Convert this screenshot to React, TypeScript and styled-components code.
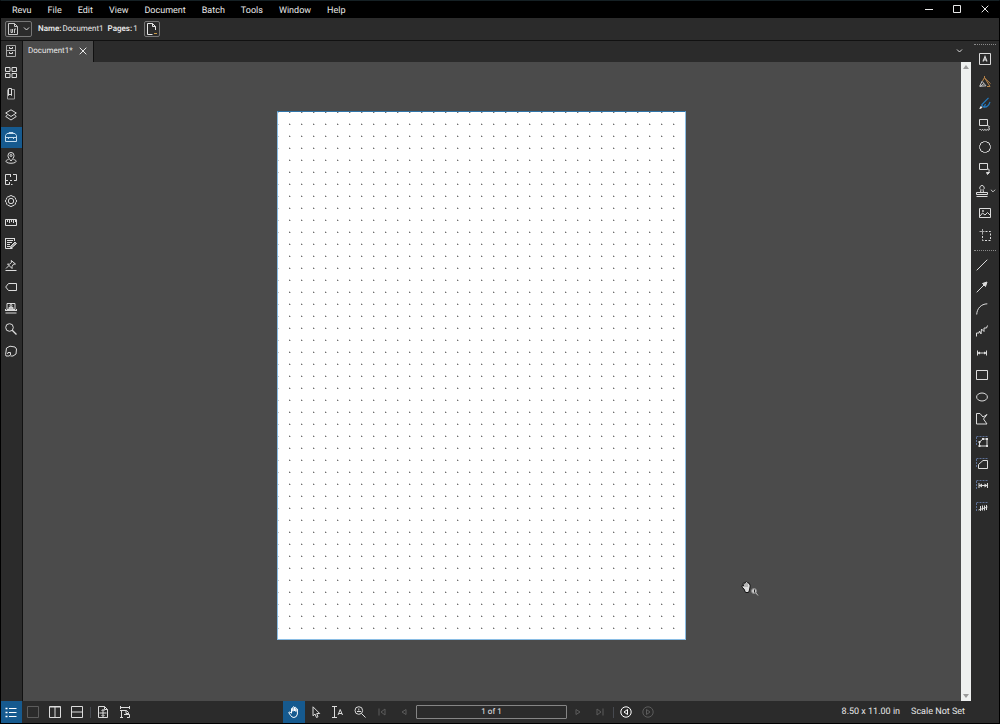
import React from "react";
import styled, { createGlobalStyle, css } from "styled-components";

const c = {
  black: "#000",
  panel: "#2b2b2b",
  canvas: "#4b4b4b",
  line: "#111",
  text: "#e8e8e8",
  icon: "#dcdcdc",
  dim: "#5c5c5c",
  accent: "#165a8f",
};

const GlobalStyle = createGlobalStyle`
  *, *::before, *::after { box-sizing: border-box; }
  html, body { margin: 0; background: ${c.black}; }
  body {
    font-family: Roboto, "Liberation Sans", sans-serif;
    color: ${c.text};
    text-rendering: geometricPrecision;
  }
  button, input { font: inherit; color: inherit; text-rendering: inherit; }
  svg { display: block; flex: none; }
`;

const Shell = styled.div`
  display: flex;
  flex-direction: column;
  min-height: 100vh;
  background: ${c.panel};
  border: 1px solid ${c.black};
  border-top-color: #152024;
`;

const plain = css`
  appearance: none;
  border: 0;
  padding: 0;
  margin: 0;
  background: none;
  display: flex;
  align-items: center;
  justify-content: center;
`;

const TitleBar = styled.header`
  display: flex;
  justify-content: space-between;
  height: 17px;
  background: ${c.black};
`;

const Menu = styled.nav`
  display: flex;
  align-items: center;
  gap: 16px;
  padding: 2px 0 0 11px;
`;

const MenuItem = styled.button`
  ${plain}
  font-size: 9px;
  line-height: 12px;
`;

const WindowButtons = styled.div`
  display: flex;
`;

const WindowButton = styled.button`
  ${plain}
  width: 28px;
  padding-bottom: 1px;
`;

const FileBar = styled.div`
  display: flex;
  align-items: center;
  height: 23px;
  padding-left: 4px;
  border-bottom: 1px solid ${c.line};
  font-size: 8px;
  line-height: 12px;
`;

const OutlineButton = styled.button<{ $width: number }>`
  ${plain}
  width: ${(p) => p.$width}px;
  height: 16px;
  gap: 4px;
  border: 1px solid #777;
  border-radius: 2px;
`;

const FactList = styled.div`
  display: flex;
  gap: 4px;
  margin: 0 6px;
`;

const Fact = styled.span`
  display: flex;
  gap: 1px;
  white-space: nowrap;
  b { font-weight: 600; }
`;

const Body = styled.div`
  display: flex;
  flex: 1;
`;

const LeftRail = styled.aside`
  display: grid;
  grid-template-rows: repeat(15, 1fr);
  width: 22px;
  height: 321px;
  flex: none;
`;

const RailButton = styled.button<{ $active?: boolean }>`
  ${plain}
  width: 21px;
  padding: 0 1px 1px 0;
  background: ${(p) => (p.$active ? c.accent : "none")};
`;

const Workspace = styled.main`
  display: flex;
  flex-direction: column;
  flex: 1;
  min-width: 0;
  border-left: 1px solid ${c.line};
  margin-left: -1px;
`;

const TabBar = styled.div`
  display: flex;
  justify-content: space-between;
  height: 21px;
`;

const Tab = styled.div`
  display: flex;
  align-items: center;
  gap: 6px;
  padding: 0 6px 1px 5px;
  background: ${c.canvas};
  border-right: 1px solid ${c.line};
  font-size: 8px;
  line-height: 12px;
`;

const TabButton = styled.button`
  ${plain}
`;

const TabMenu = styled.button`
  ${plain}
  width: 24px;
  padding-bottom: 2px;
`;

const View = styled.div`
  display: flex;
  flex: 1;
`;

const Canvas = styled.section`
  position: relative;
  display: flex;
  flex: 1;
  justify-content: center;
  align-items: flex-start;
  padding: 49px 21px 60px 0;
  background: ${c.canvas};
`;

const Sheet = styled.div`
  width: 409px;
  height: 529px;
  border: 1px solid #8abde4;
  border-top-color: #2f74a8;
  background-color: #fff;
  background-image: url("data:image/svg+xml,%3Csvg xmlns='http://www.w3.org/2000/svg' width='12' height='12'%3E%3Cpath d='M11 0h1v1h-1z' fill='%23707070'/%3E%3Cpath d='M0 0h1v1H0zM11 11h1v1h-1z' fill='%23c8c8c8'/%3E%3C/svg%3E");
`;

const Pointer = styled.div`
  position: absolute;
  right: 202px;
  bottom: 104px;
`;

const Scrollbar = styled.div`
  display: flex;
  flex-direction: column;
  justify-content: space-between;
  width: 10px;
  background: #eef0ef;
`;

const ScrollButton = styled.button`
  ${plain}
  height: 10px;
`;

const RightRail = styled.aside`
  width: 28px;
  flex: none;
  padding-top: 3px;
`;

const Grip = styled.div`
  width: 22px;
  margin-left: 3px;
  border-top: 1px dotted #8a8a8a;
`;

const Tools = styled.div<{ $inset: number }>`
  display: flex;
  flex-direction: column;
  padding: 3px 0 4px ${(p) => p.$inset}px;
`;

const Tool = styled.button`
  ${plain}
  justify-content: flex-start;
  gap: 2px;
  height: 22px;
`;

const StatusBar = styled.footer`
  display: flex;
  align-items: stretch;
  height: 22px;
`;

const StatusButton = styled.button<{ $active?: boolean }>`
  ${plain}
  width: 22px;
  color: ${c.icon};
  background: ${(p) => (p.$active ? c.accent : "none")};
  &:disabled { color: ${c.dim}; }
`;

const PanelToggle = styled(StatusButton)`
  width: 21px;
  padding-right: 1px;
`;

const Divider = styled.span`
  align-self: center;
  width: 1px;
  height: 11px;
  margin: 0 1px 0 2px;
  background: #474a50;
`;

const Group = styled.div<{ $start?: number }>`
  display: flex;
  align-items: stretch;
  margin-left: ${(p) => p.$start ?? 0}px;
`;

const PageField = styled.input`
  align-self: center;
  width: 151px;
  height: 14px;
  margin: 0 0 0 1px;
  padding: 0 0 2px;
  border: 1px solid #858585;
  border-radius: 1px;
  background: transparent;
  text-align: center;
  font-size: 8px;
`;

const Facts = styled.div`
  display: flex;
  align-items: center;
  gap: 11px;
  margin-left: auto;
  padding: 0 34px 1px 0;
  font-size: 9px;
  line-height: 12px;
  white-space: nowrap;
`;

type IconProps = { children: React.ReactNode; w?: number; h?: number; color?: string };

const Icon = ({ children, w = 12, h = 12, color = "currentColor" }: IconProps) => (
  <svg width={w} height={h} viewBox={`0 0 ${w} ${h}`} fill="none" stroke={color} strokeWidth={1} aria-hidden="true">
    {children}
  </svg>
);

const P = ({ d, ...rest }: React.SVGProps<SVGPathElement>) => <path d={d} {...rest} />;

const railIcons: { label: string; art: React.ReactNode; active?: boolean }[] = [
  { label: "File Access", art: <><P d="M2 .5h8.500v11H1.500V.5zM1.500 5.500h9" stroke="#aaa" /><P d="M4.500 2v1.500h3V2M4.500 7v1.500h3V7" /></> },
  { label: "Thumbnails", art: <P d="M.5.5h4.500v4H.5zM7 .5h4.500v4H7zM.5 6.500h4.500v4H.5zM7 6.500h4.500v4H7z" /> },
  { label: "Bookmarks", art: <><P d="M7 1.500h2.500v9.500h-7v-9.500" stroke="#999" /><P d="M3.500.5v7l1.500-1.500 1.500 1.500V.5z" /></> },
  { label: "Layers", art: <P d="M6 .8l5.300 3.200L6 7.500.7 4zM2.500 6L.7 7.500 6 11l5.300-3.500L9.500 6" /> },
  { label: "Tool Chest", active: true, art: <P d="M.5 4.500l1.500-2h8l1.500 2v6h-11zM.5 6.500h11M4 2.500v-1h4v1M3.500 6v2M8.500 6v2" /> },
  { label: "Places", art: <><P d="M6 9C4 6.500 3 5.500 3 3.500a3 3 0 016 0C9 5.500 8 6.500 6 9z" /><circle cx="6" cy="3.500" r="1" /><P d="M3.500 7.500C.8 8 .2 9.500 2 10.500c2 1 6 1 8 0s1.200-2.500-1.500-3" /></> },
  { label: "Spaces", art: <P d="M6 .5H.5v6h2.500M5 6.500h2M8 .5h3.500v6H9M5.500 3v-2.500M.5 6v4.500h4V8M6 10.500h1.500" /> },
  { label: "Properties", art: <><circle cx="6" cy="6" r="2.700" /><P d="M4.800.7h2.400l.6 1.100 1.200-.2L10.500 3l-.1 1.200 1 .8v2l-1 .8.1 1.200L9 10.500l-1.200-.2-.6 1.100H4.800l-.6-1.100-1.200.2L1.500 9l.1-1.200-1-.8V5l1-.8L1.500 3 3 1.600l1.200.2z" /></> },
  { label: "Measurements", art: <P d="M.5 3.500h11v6H.5zM2.500 4v2M4.500 4v3M6.500 4v2M8.500 4v3M10.500 4v2" /> },
  { label: "Forms", art: <><P d="M.5.5h9M.5 0v10.500h7M9.500 0v3M2 2.500h6M2 4.500h5M2 6.500h3M2 8.500h3" /><P d="M5.500 8.500L10 4l1.500 1.500L7 9.500H5.500z" fill="#999" /></> },
  { label: "Signatures", art: <P d="M.5 11.500h11M1 9.500l3-3M2.500 5l2 .2L6.500 3.500 6.200 1.500 10.500 5 8.500 5.200 7 7.500v2L2.500 5" /> },
  { label: "Markups List", art: <P d="M3.500 2.500h8v7h-8L.7 6z" /> },
  { label: "Studio", art: <><P d="M2 1.500h8v6H2zM.5 8.500h11M.5 11h11M.5 7v2M11.500 7v2" /><P d="M4 7.500V5.300h4v2.200" fill="#bbb" /><circle cx="6" cy="3.500" r="1" /></> },
  { label: "Search", art: <><circle cx="4.500" cy="4.500" r="3.800" /><P d="M7.200 7.200l4.300 4.300" strokeWidth={1.300} /></> },
  { label: "Sets", art: <P d="M1.500 3L5 1.200l5 .8 1.500 2-.5 5-3 2H5.500M1.500 3L.6 9.500 1 11h3l1.500-1V7.500H3L2.500 9" /> },
];

const sideTicks = <P d="M.5 1.500h11M.5 2v9" stroke="#5c6f94" strokeDasharray="2 1" />;

const markupTools: { label: string; art: React.ReactNode; more?: boolean }[] = [
  { label: "Text Box", art: <><P d="M.5.5h11v11H.5z" /><P d="M4 8.500l2-5 2 5M4.700 7h2.600" strokeWidth={1.200} /></> },
  { label: "Pen", art: <><P d="M.7 11.300l2.300-5 4 4.500zM1 11.500l4-3" stroke="#c4c4c4" /><P d="M3.500 6l2-3.500 5.500 9H8M5.500 1v2l6 5.500" stroke="#b98549" /></> },
  { label: "Highlighter", art: <><P d="M2.500 8L9.500.8M2.500 8l2.500 2.300L6.500 7M5 10c3 .5 5-2 6-5" stroke="#2479bd" strokeWidth={1.200} /><P d="M.8 11.500l1.200-2 1 1z" fill="#eee" stroke="#eee" /></> },
  { label: "Cloud Plus", art: <P d="M.5.500h8v6h-8zM.5 10.500h1l1 .8 1-.8 1.200.8 1.200-.8 1.200.8 1.200-.8 1.200.8 1-1.300-.8-1.200.8-1.200L8.500 6.500" /> },
  { label: "Cloud", art: <P d="M4 1.500a2.100 2.100 0 014 0 2 2 0 012.500 2.500 2.100 2.100 0 010 4 2 2 0 01-2.500 2.500 2.100 2.100 0 01-4 0 2 2 0 01-2.500-2.500 2.100 2.100 0 010-4A2 2 0 014 1.500z" /> },
  { label: "Callout", art: <><P d="M.5.5h8v6h-8zM8.500 5.500c2 .5 2 2 1 4.500" /><P d="M7.500 9.500h3L8.500 11.500z" fill="#ddd" /></> },
  { label: "Stamp", more: true, art: <P d="M.5 7.500h11v2H.5zM.5 11.500h11M4.500 7.500l.5-2.800a2.200 2.200 0 112 0l.5 2.800" /> },
  { label: "Image", art: <><P d="M.5 1.500h11v9H.5zM1 9l2.500-3L6 8l2.500-2.500L11 8" /><circle cx="4" cy="4" r=".6" /></> },
  { label: "Snapshot", art: <><P d="M3.500 0v5M.5 2.500h5" stroke="#aaa" /><P d="M6.500 2.500h5v9h-8V5" strokeDasharray="2 1.500" /></> },
];

const shapeTools: { label: string; art: React.ReactNode }[] = [
  { label: "Line", art: <P d="M.7 11.300L11.300.7" /> },
  { label: "Arrow", art: <><P d="M.7 11.300L9 3" /><P d="M6.500 2.500L11 1 9.500 5.500z" fill="#ddd" /></> },
  { label: "Arc", art: <P d="M.7 11.500C1 5.500 5 1 11.300.8" /> },
  { label: "Polyline", art: <P d="M.5 11.500V8H3l.5-2 1.500 3 .5-5 2.500 2.500L8 3h2.500l1-2.500" /> },
  { label: "Dimension", art: <><P d="M1.500 3.500v5M10.500 3.500v5M1 6h10" /><P d="M1.500 6L4 4.500v3zM10.500 6L8 4.500v3z" fill="#ddd" stroke="none" /></> },
  { label: "Rectangle", art: <P d="M.5 1.500h11v9H.5z" /> },
  { label: "Ellipse", art: <ellipse cx="6" cy="6" rx="5.400" ry="4" /> },
  { label: "Polygon", art: <P d="M.5.500v10.500h10.500L7.500 6l3.500-4.500L7 4 4 .500z" /> },
  { label: "Area Polylength", art: <>{sideTicks}<P d="M3.500 11V7l3.500-3h4v7H3.500z" /><P d="M2.500 10h2v2h-2zM10 10h2v2h-2zM10 3h2v2h-2zM6 3h2v2H6zM2.500 6h2v2h-2z" fill="#ddd" stroke="none" /></> },
  { label: "Area", art: <>{sideTicks}<P d="M2.500 11.500v-4l4.500-4h4.500v8z" /></> },
  { label: "Length", art: <>{sideTicks}<P d="M3 4v5M11.500 4v5M3 6.500h8" /><P d="M3 6.500L6 4.500v4zM11.500 6.500l-3-2v4z" fill="#ddd" stroke="none" /></> },
  { label: "Count", art: <>{sideTicks}<P d="M4.500 5v5M6.500 4.500v5M8.500 4.500v5M10.500 4v5M2.500 9l9-3" /></> },
];

const Chevron = ({ w = 7 }: { w?: number }) => (
  <svg width={w} height="4" viewBox="0 0 7 4" fill="none" stroke={c.icon} aria-hidden="true">
    <path d="M1 .5l2.500 2.500L6 .5" />
  </svg>
);

const HandArt = () => (
  <P d="M3.500 7V2.500q.7-1 1.400 0V5.500M4.900 5V1.200q.7-1 1.500 0V5M6.400 5V1.700q.7-1 1.500 0v3.800M7.900 5.500V3q.8-1 1.500 0v5q-.5 3.300-3.500 3.500-2 0-3.200-2L.8 6.800Q1 5.500 2.200 6.200L3.500 7.500" />
);

export default function App() {
  return (
    <>
      <GlobalStyle />
      <Shell>
        <TitleBar>
          <Menu aria-label="Main menu">
            {["Revu", "File", "Edit", "View", "Document", "Batch", "Tools", "Window", "Help"].map((name) => (
              <MenuItem key={name}>{name}</MenuItem>
            ))}
          </Menu>
          <WindowButtons>
            <WindowButton aria-label="Minimize"><Icon w={8} h={8}><P d="M0 4.500h8" /></Icon></WindowButton>
            <WindowButton aria-label="Maximize"><Icon w={8} h={8}><P d="M.5.5h7v7h-7z" /></Icon></WindowButton>
            <WindowButton aria-label="Close"><Icon w={8} h={8}><P d="M.7.7l6.600 6.600M7.300.7L.7 7.300" /></Icon></WindowButton>
          </WindowButtons>
        </TitleBar>

        <FileBar>
          <OutlineButton $width={27} aria-label="Document properties">
            <Icon color="#c8c8c8"><P d="M1.500.5h6l3 3v8h-9zM7.500.5v3h3" /><P d="M4 6v3.500h1.500V6M7.500 10V6h1.500" /></Icon>
            <Chevron />
          </OutlineButton>
          <FactList>
            <Fact><b>Name:</b><span>Document1</span></Fact>
            <Fact><b>Pages:</b><span>1</span></Fact>
          </FactList>
          <OutlineButton $width={16} aria-label="Insert page">
            <Icon><P d="M9.500 7V3.500l-3-3h-5v11h5M6.500.5v3h3" /><P d="M8 10.500h3" stroke="#c99a4a" /></Icon>
          </OutlineButton>
        </FileBar>

        <Body>
          <LeftRail aria-label="Panels">
            {railIcons.map((r) => (
              <RailButton key={r.label} aria-label={r.label} $active={r.active}>
                <Icon color={r.active ? "#c4dcee" : c.icon}>{r.art}</Icon>
              </RailButton>
            ))}
          </LeftRail>

          <Workspace>
            <TabBar>
              <Tab>
                <TabButton>Document1*</TabButton>
                <TabButton aria-label="Close Document1"><Icon w={8} h={8}><P d="M.7.7l6.600 6.600M7.300.7L.7 7.300" /></Icon></TabButton>
              </Tab>
              <TabMenu aria-label="Open documents"><Chevron /></TabMenu>
            </TabBar>
            <View>
              <Canvas>
                <Sheet />
                <Pointer>
                  <svg width="18" height="16" viewBox="0 0 18 16" fill="none" aria-hidden="true">
                    <path d="M3 8L.8 6Q.5 4 2.500 5L2 2.500Q3 1 4 2.500L4.500 1Q6 0 6.500 1.500 8 1 8 3q1.500 0 1.200 2L8.500 9 7.500 11.500H4.500z" fill="#ddd" stroke="#111" />
                    <path d="M4 3v3M6 2v4" stroke="#555" strokeWidth=".6" />
                    <circle cx="13" cy="10" r="2.500" fill="#ccc" stroke="#888" />
                    <path d="M13.500 8.500v3" stroke="#222" />
                    <path d="M15 12l2 2.500" stroke="#bbb" />
                  </svg>
                </Pointer>
              </Canvas>
              <Scrollbar>
                <ScrollButton aria-label="Scroll up"><Icon w={6} h={4}><P d="M0 4l3-4 3 4z" fill="#999" stroke="none" /></Icon></ScrollButton>
                <ScrollButton aria-label="Scroll down"><Icon w={6} h={4}><P d="M0 0l3 4 3-4z" fill="#999" stroke="none" /></Icon></ScrollButton>
              </Scrollbar>
            </View>
          </Workspace>

          <RightRail aria-label="Tools">
            <Grip />
            <Tools $inset={8}>
              {markupTools.map((t) => (
                <Tool key={t.label} aria-label={t.label}>
                  {t.more ? <Group $start={-3}><Icon color={c.icon}>{t.art}</Icon></Group> : <Icon color={c.icon}>{t.art}</Icon>}
                  {t.more && <Chevron w={6} />}
                </Tool>
              ))}
            </Tools>
            <Grip />
            <Tools $inset={5}>
              {shapeTools.map((t) => (
                <Tool key={t.label} aria-label={t.label}><Icon color={c.icon}>{t.art}</Icon></Tool>
              ))}
            </Tools>
          </RightRail>
        </Body>

        <StatusBar>
          <PanelToggle $active aria-label="Markups list"><Icon color="#fff"><P d="M4 2.500h7.500M4 6.500h7.500M4 10.500h7.500" /><P d="M.5 2.500h2M.5 6.500h2M.5 10.500h2" strokeWidth={1.500} /></Icon></PanelToggle>
          <StatusButton disabled aria-label="Single view"><Icon><P d="M.5.5h11v11H.5z" /></Icon></StatusButton>
          <StatusButton aria-label="Split vertical"><Icon><P d="M.5.5h11v11H.5zM6 1v10M.5 1h11" /></Icon></StatusButton>
          <StatusButton aria-label="Split horizontal"><Icon><P d="M.5.5h11v11H.5zM.5 6h11" /></Icon></StatusButton>
          <Divider />
          <StatusButton aria-label="Fit page"><Icon><P d="M1.500.5h6l3 3v8h-9zM7.500.5v3h3M6 3.500v7M2.500 7h7M4.500 5L6 3.500 7.500 5M4.500 9L6 10.500 7.500 9" /></Icon></StatusButton>
          <StatusButton aria-label="Fit width"><Icon><P d="M1.500 0v3M10.500 0v3M1.500 1.500h9M2.500 11.500v-7h5l2 2v2M1 4.500h3M7 4.500v3h3M5 8.500h5.500v3H8M1 11.500h3" /></Icon></StatusButton>

          <Group $start={147}>
            <StatusButton $active aria-label="Pan"><Icon color="#fff"><HandArt /></Icon></StatusButton>
            <StatusButton aria-label="Select"><Icon><P d="M3 .8v9l2-1.800 1.500 3.500 1.500-.7L6.700 7.500h3z" /></Icon></StatusButton>
            <StatusButton aria-label="Select text"><Icon><P d="M0 .5h5M2.500.5v11M0 11.500h5M6 9l2.200-5.500L10.500 9M7 7.500h3" /></Icon></StatusButton>
            <StatusButton aria-label="Zoom"><Icon><circle cx="4.800" cy="4.500" r="3.800" /><P d="M7.500 7.500l4 4M3 5.500h4M4.800 2.500v2" /></Icon></StatusButton>
            <StatusButton disabled aria-label="First page"><Icon w={8} h={8}><P d="M1 .5v7M7 1v6L3 4z" /></Icon></StatusButton>
            <StatusButton disabled aria-label="Previous page"><Icon w={8} h={8}><P d="M6 1.500v5L2 4z" /></Icon></StatusButton>
            <PageField aria-label="Page" defaultValue="1 of 1" />
            <StatusButton disabled aria-label="Next page"><Icon w={8} h={8}><P d="M2 1.500v5L6 4z" /></Icon></StatusButton>
            <StatusButton disabled aria-label="Last page"><Icon w={8} h={8}><P d="M7 .5v7M1 1v6l4-3z" /></Icon></StatusButton>
            <Divider />
            <StatusButton aria-label="Previous view"><Icon color="#fff"><circle cx="6" cy="6" r="5.200" /><P d="M7.500 3.500v5L4 6z" /></Icon></StatusButton>
            <StatusButton disabled aria-label="Next view"><Icon><circle cx="6" cy="6" r="5.200" /><P d="M4.500 3.500v5L8 6z" /></Icon></StatusButton>
          </Group>

          <Facts>
            <span>8.50 x 11.00 in</span>
            <span>Scale Not Set</span>
          </Facts>
        </StatusBar>
      </Shell>
    </>
  );
}
